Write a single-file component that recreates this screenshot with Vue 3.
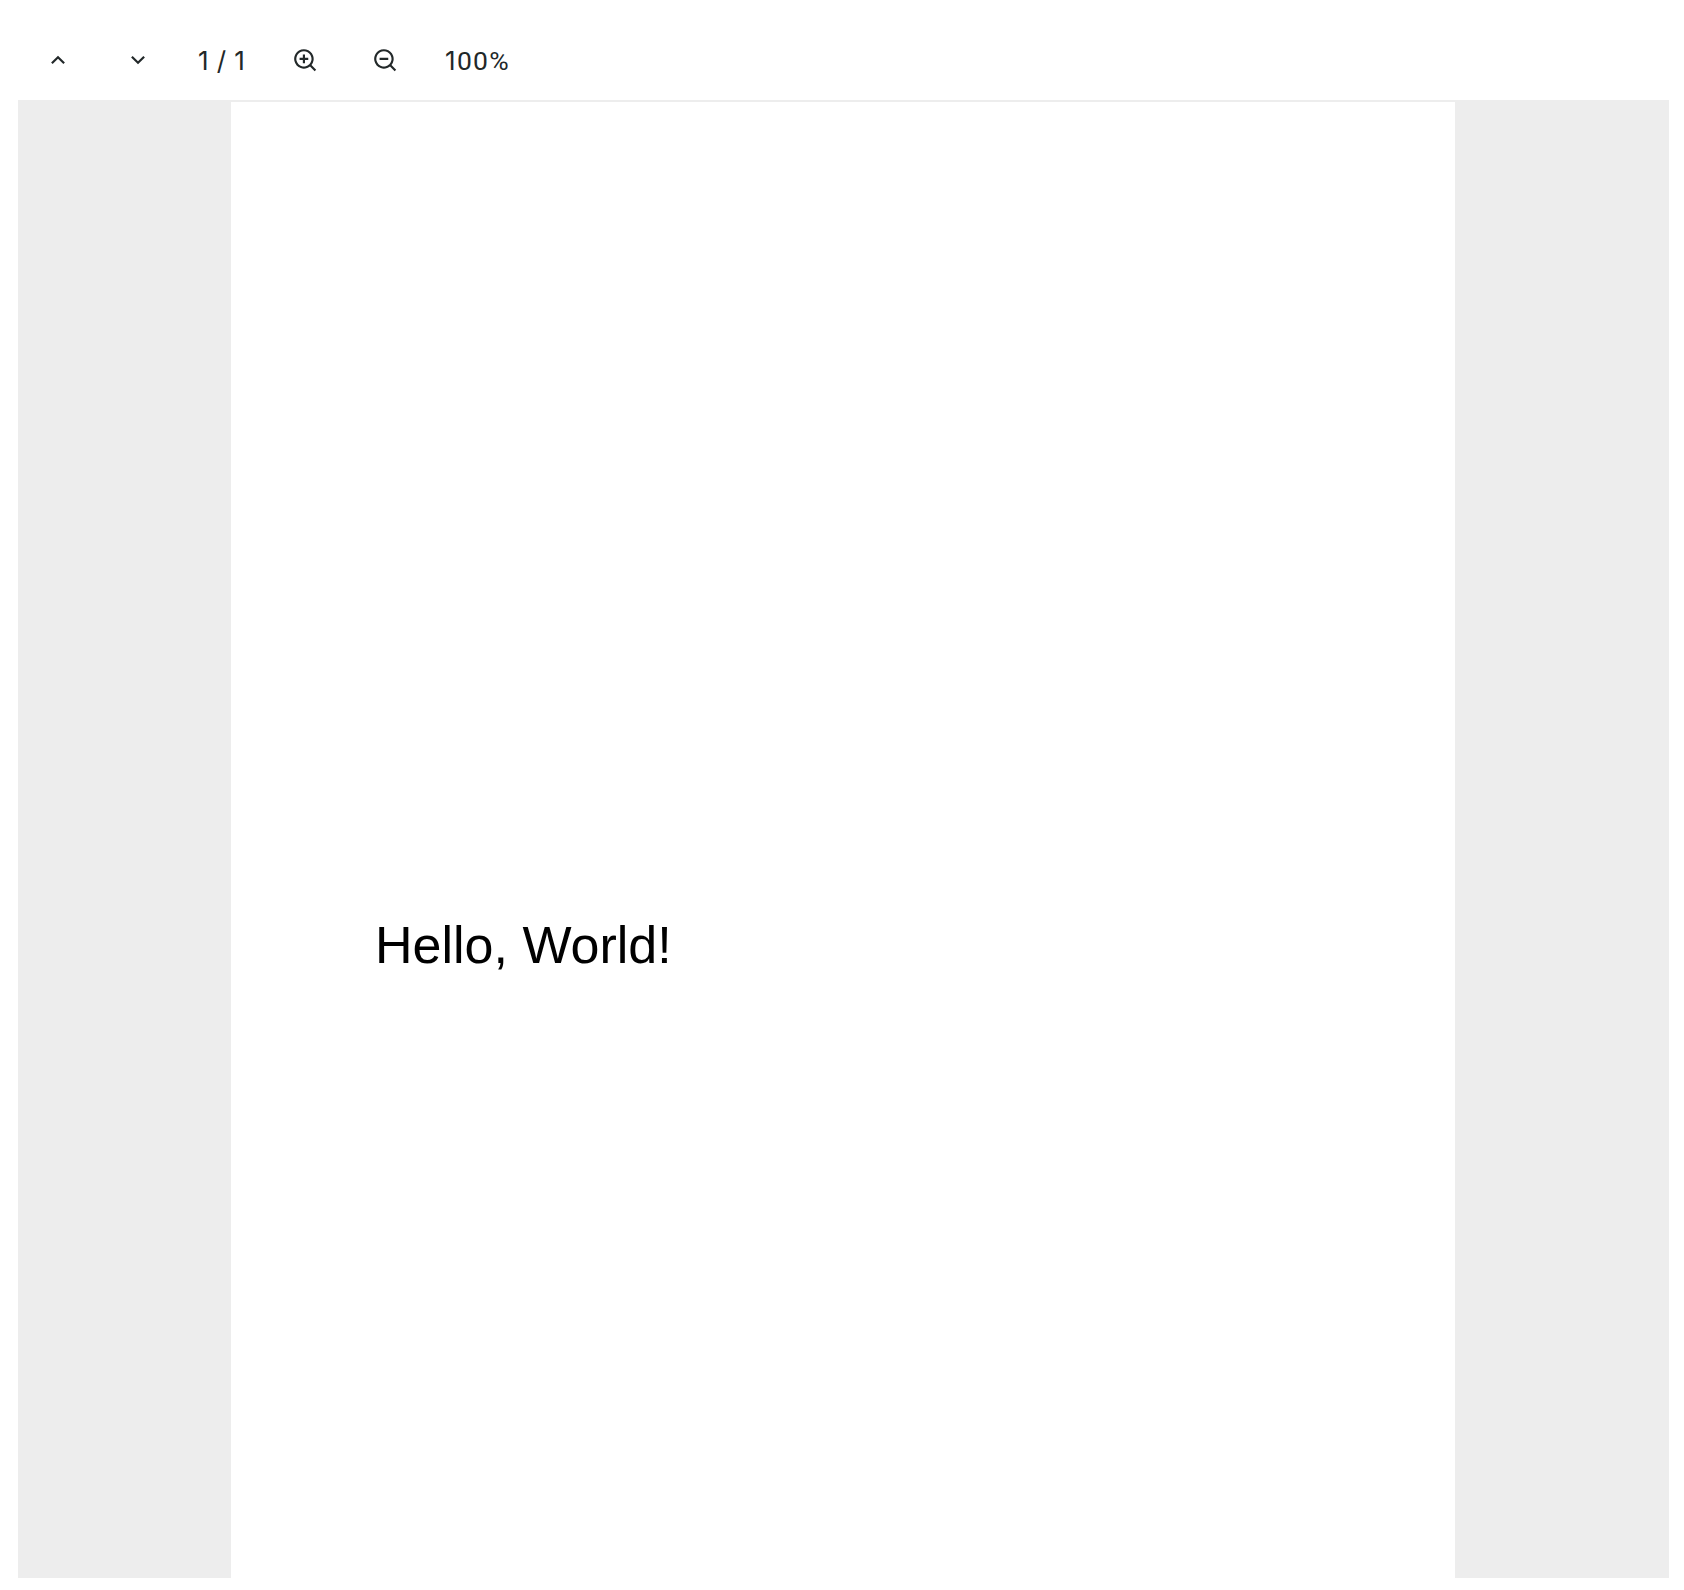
<script setup>
import { ref, computed } from 'vue'

const page = ref(1)
const pages = ref(1)
const zoom = ref(100)
const lead = computed(() => String(zoom.value).slice(0, 1))
const rest = computed(() => String(zoom.value).slice(1) + '%')
</script>

<template>
  <div class="viewer">
    <div class="toolbar">
      <button class="tool" aria-label="Previous page">
        <svg viewBox="0 0 24 24"><path d="M12 10.828L7.05 15.778L5.636 14.364L12 8L18.364 14.364L16.95 15.778Z" /></svg>
      </button>
      <button class="tool" aria-label="Next page">
        <svg viewBox="0 0 24 24"><path d="M12 13.172L16.95 8.222L18.364 9.636L12 16L5.636 9.636L7.05 8.222Z" /></svg>
      </button>
      <span class="pages">{{ page }} / {{ pages }}</span>
      <button class="tool" aria-label="Zoom in">
        <svg viewBox="0 0 24 24"><path d="M18.031 16.617L22.314 20.899L20.899 22.314L16.617 18.031A9 9 0 1 1 18.031 16.617ZM16.025 15.875A7 7 0 1 0 15.875 16.025ZM10 10V7H12V10H15V12H12V15H10V12H7V10Z" /></svg>
      </button>
      <button class="tool" aria-label="Zoom out">
        <svg viewBox="0 0 24 24"><path d="M18.031 16.617L22.314 20.899L20.899 22.314L16.617 18.031A9 9 0 1 1 18.031 16.617ZM16.025 15.875A7 7 0 1 0 15.875 16.025ZM7 10H15V12H7Z" /></svg>
      </button>
      <span class="zoom">{{ lead }}<span class="rest">{{ rest }}</span></span>
    </div>
    <div class="canvas">
      <div class="sheet">
        <p class="line">Hello, World!</p>
      </div>
    </div>
  </div>
</template>

<style>
body {
  background: #fff;
}
</style>

<style scoped>
.viewer {
  box-sizing: border-box;
  height: 1590px;
  padding: 20px 15px 12px 18px;
  display: flex;
  flex-direction: column;
  font-family: Inter, sans-serif;
  color: #222829;
}
.toolbar {
  box-sizing: border-box;
  height: 82px;
  border-bottom: 2px solid #ededed;
  display: flex;
  align-items: center;
  font-size: 26px;
  line-height: 32px;
}
.tool {
  width: 80px;
  height: 64px;
  padding: 0 1px 0 0;
  border: 0;
  background: none;
  color: inherit;
  display: flex;
  align-items: center;
  justify-content: center;
}
.tool svg {
  width: 26px;
  height: 26px;
  fill: currentColor;
}
.pages {
  width: 87px;
  padding: 2px 0 0 20px;
  box-sizing: border-box;
  white-space: nowrap;
  letter-spacing: 0.4px;
}
.zoom {
  padding: 2px 0 0 20px;
  letter-spacing: 1.3px;
}
.rest {
  font-family: Roboto, sans-serif;
  font-size: 26.5px;
}
.canvas {
  flex: 1;
  display: flex;
  justify-content: center;
  background: #ededed;
}
.sheet {
  width: 1224px;
  margin-right: 1px;
  box-sizing: border-box;
  padding: 813px 144px 0;
  background: #fff;
}
.line {
  margin: 0;
  font: 52px/60px "Liberation Sans", Arial, sans-serif;
  color: #000;
}
</style>
